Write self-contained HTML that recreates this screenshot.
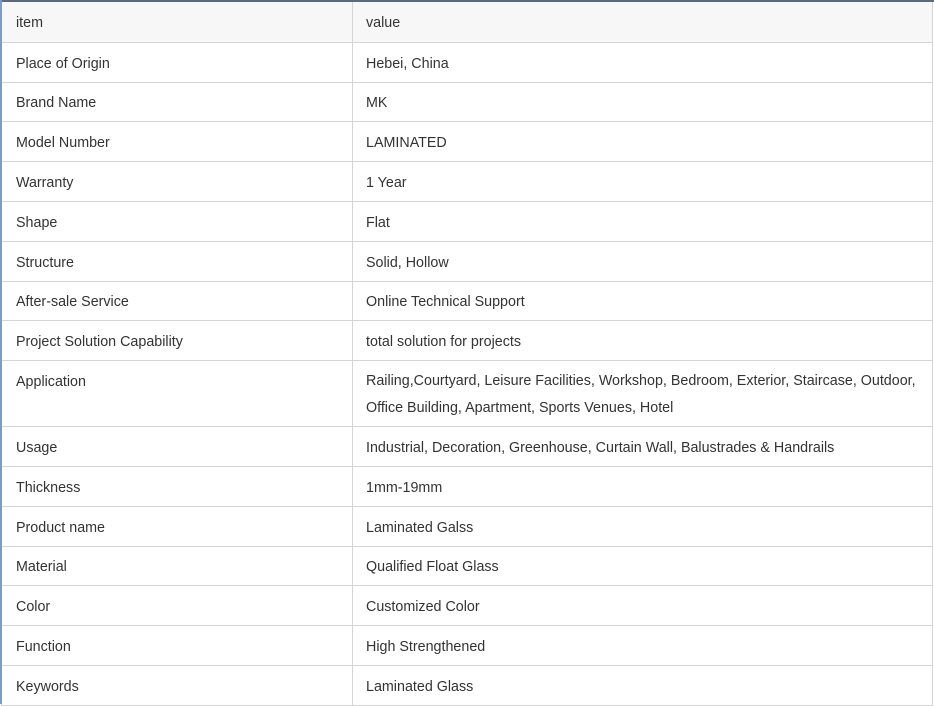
<!DOCTYPE html>
<html><head><style>
html,body{margin:0;padding:0;width:934px;height:704px;overflow:hidden;background:#fff}
.top{position:absolute;left:0;top:0;width:934px;height:2px;background:#5a6a80}
.left{position:absolute;left:0;top:0;width:2px;height:704px;background:#7a9cc8}
table{position:absolute;left:1px;top:1px;border-collapse:collapse;width:932px;font-family:"Liberation Sans",Arial,sans-serif;font-size:14.3px;color:#333;table-layout:fixed}
td{border:1px solid #d4d4d4;padding:3px 0 0 13px;height:35.8px;vertical-align:middle;line-height:26px}
td:first-child{width:336px;padding-left:14px}
tr:first-child td{background:#f7f7f8;height:36.8px}
tr.tall td{height:62px;line-height:27px}
tr.tall td:first-child{vertical-align:top;padding-top:8px;height:57px}
</style></head><body>
<table>
<tr><td>item</td><td>value</td></tr>
<tr><td>Place of Origin</td><td>Hebei, China</td></tr>
<tr><td>Brand Name</td><td>MK</td></tr>
<tr><td>Model Number</td><td>LAMINATED</td></tr>
<tr><td>Warranty</td><td>1 Year</td></tr>
<tr><td>Shape</td><td>Flat</td></tr>
<tr><td>Structure</td><td>Solid, Hollow</td></tr>
<tr><td>After-sale Service</td><td>Online Technical Support</td></tr>
<tr><td>Project Solution Capability</td><td>total solution for projects</td></tr>
<tr class="tall"><td>Application</td><td>Railing,Courtyard, Leisure Facilities, Workshop, Bedroom, Exterior, Staircase, Outdoor, Office Building, Apartment, Sports Venues, Hotel</td></tr>
<tr><td>Usage</td><td>Industrial, Decoration, Greenhouse, Curtain Wall, Balustrades &amp; Handrails</td></tr>
<tr><td>Thickness</td><td>1mm-19mm</td></tr>
<tr><td>Product name</td><td>Laminated Galss</td></tr>
<tr><td>Material</td><td>Qualified Float Glass</td></tr>
<tr><td>Color</td><td>Customized Color</td></tr>
<tr><td>Function</td><td>High Strengthened</td></tr>
<tr><td>Keywords</td><td>Laminated Glass</td></tr>
</table>
<div class="top"></div><div class="left"></div>
</body></html>
